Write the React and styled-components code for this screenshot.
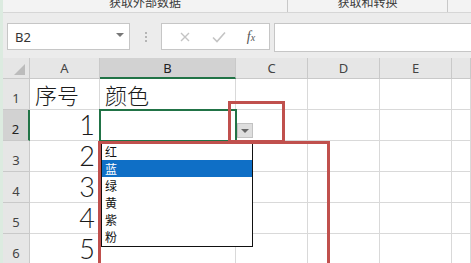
import React from 'react'
import styled, { createGlobalStyle } from 'styled-components'

const GlobalStyle = createGlobalStyle`
    html, body {
        margin: 0;
        padding: 0;
        background: #ffffff;
        overflow: hidden;
    }
    body {
        font-family: "Noto Sans", "Noto Sans CJK SC", sans-serif;
    }
`

const Page = styled.div`
    width: 471px;
    height: 263px;
    overflow: hidden;
    display: flex;
    flex-direction: column;
    background: #ececec;
    border-left: 3px solid #dcebe0;
    box-sizing: border-box;
`

const Ribbon = styled.div`
    height: 12px;
    flex: none;
    display: flex;
    background: #f3f3f3;
    border-bottom: 1px solid #d6d6d6;
    overflow: hidden;
`

const RibbonGroup = styled.div`
    width: ${p => p.w}px;
    flex: none;
    display: flex;
    justify-content: center;
    border-right: 1px solid #c8c8c8;
    font-family: "Noto Sans CJK SC", sans-serif;
    font-size: 12px;
    line-height: 12px;
    color: #3a3a3a;
    & > span {
        margin-top: -4px;
    }
`

const Toolbar = styled.div`
    height: 45px;
    flex: none;
    display: flex;
    align-items: flex-start;
    padding: 10px 0 0 4px;
    box-sizing: border-box;
`

const NameBox = styled.div`
    width: 123px;
    height: 27px;
    box-sizing: border-box;
    background: #fff;
    border: 1px solid #c6c6c6;
    display: flex;
    align-items: center;
    justify-content: space-between;
    padding: 0 5px 0 7px;
    font-family: "Noto Sans", sans-serif;
    font-size: 13px;
    color: #333;
`

const Caret = styled.span`
    width: 0;
    height: 0;
    border-left: 4px solid transparent;
    border-right: 4px solid transparent;
    border-top: 4px solid #777;
    margin-bottom: 4px;
`

const Dots = styled.div`
    width: 31px;
    height: 27px;
    display: flex;
    flex-direction: column;
    align-items: center;
    justify-content: center;
    gap: 2px;
    & > i {
        width: 2px;
        height: 2px;
        background: #b5b5b5;
    }
`

const FuncBox = styled.div`
    width: 109px;
    height: 27px;
    box-sizing: border-box;
    background: #fff;
    border: 1px solid #c6c6c6;
    display: flex;
    align-items: center;
    justify-content: space-around;
    padding: 0 4px 0 6px;
    margin-right: 4px;
`

const Fx = styled.span`
    font-family: "Liberation Serif", serif;
    font-style: italic;
    font-size: 14px;
    color: #555;
    & > small {
        font-size: 10px;
    }
`

const Formula = styled.div`
    flex: 1;
    height: 27px;
    background: #fff;
    border: 1px solid #c6c6c6;
    border-right: none;
`

const SheetArea = styled.div`
    position: relative;
    flex: 1;
    background: #fff;
`

const Grid = styled.div`
    display: grid;
    grid-template-columns: 27px 70px 136px 72px 72px 72px 1fr;
    grid-template-rows: 21px repeat(6, 31px);
`

const Head = styled.div`
    background: ${p => (p.active ? '#d2d2d2' : '#e6e6e6')};
    border-right: 1px solid #c9c9c9;
    border-bottom: ${p => (p.active && !p.row ? '2px solid #217346' : '1px solid #c9c9c9')};
    ${p => p.active && p.row && 'border-right: 2px solid #217346;'}
    box-sizing: border-box;
    display: flex;
    align-items: center;
    justify-content: center;
    font-family: "Noto Sans", sans-serif;
    font-size: 13px;
    color: ${p => (p.active ? '#222' : '#444')};
    padding-top: ${p => (p.row ? '8px' : '0')};
`

const Corner = styled.div`
    background: #e6e6e6;
    border-right: 1px solid #c9c9c9;
    border-bottom: 1px solid #c9c9c9;
    box-sizing: border-box;
    display: flex;
    align-items: flex-end;
    justify-content: flex-end;
    padding: 0 4px 3px 0;
    & > i {
        width: 0;
        height: 0;
        border-left: 11px solid transparent;
        border-bottom: 11px solid #bcbcbc;
    }
`

const Cell = styled.div`
    border-right: 1px solid #d9d9d9;
    border-bottom: 1px solid #d9d9d9;
    box-sizing: border-box;
    display: flex;
    align-items: flex-end;
    justify-content: ${p => (p.num ? 'flex-end' : 'flex-start')};
    padding: ${p => (p.num ? '0 4px 0 0' : '0 0 1px 5px')};
    font-family: ${p => (p.num ? 'Lato, "Liberation Sans", sans-serif' : '"Noto Sans CJK SC", sans-serif')};
    font-size: ${p => (p.num ? '27px' : '22px')};
    line-height: ${p => (p.num ? '30px' : '28px')};
    font-weight: 300;
    color: #1a1a1a;
`

const Selection = styled.div`
    position: absolute;
    left: 96px;
    top: 51px;
    width: 138px;
    height: 33px;
    border: 2px solid #217346;
    box-sizing: border-box;
`

const DropButton = styled.div`
    position: absolute;
    left: 234px;
    top: 65px;
    width: 16px;
    height: 15px;
    box-sizing: border-box;
    background: #dedede;
    border: 1px solid #c2c2c2;
    display: flex;
    align-items: center;
    justify-content: center;
`

const DropCaret = styled.span`
    width: 0;
    height: 0;
    border-left: 4px solid transparent;
    border-right: 4px solid transparent;
    border-top: 4px solid #666;
`

const List = styled.ul`
    position: absolute;
    left: 98px;
    top: 84px;
    width: 152px;
    margin: 0;
    padding: 0;
    list-style: none;
    background: #fff;
    border: 1px solid #111;
    box-sizing: border-box;
    padding-bottom: 1px;
`

const Item = styled.li`
    height: 17px;
    line-height: 17px;
    padding-left: 3px;
    font-family: "Noto Sans CJK SC", sans-serif;
    font-size: 12px;
    background: ${p => (p.selected ? '#0f6fc6' : 'transparent')};
    color: ${p => (p.selected ? '#fff' : '#111')};
`

const RedBox = styled.div`
    position: absolute;
    left: ${p => p.x}px;
    top: ${p => p.y}px;
    width: ${p => p.w}px;
    height: ${p => p.h}px;
    border: 3px solid #c0504d;
    box-sizing: border-box;
`

const columns = ['A', 'B', 'C', 'D', 'E', '']
const options = ['红', '蓝', '绿', '黄', '紫', '粉']

export default function App() {
    const rows = [
        ['序号', '颜色'],
        ['1', ''],
        ['2', ''],
        ['3', ''],
        ['4', ''],
        ['5', ''],
    ]

    return (
        <Page>
            <GlobalStyle />
            <Ribbon>
                <RibbonGroup w={284}><span>获取外部数据</span></RibbonGroup>
                <RibbonGroup w={159}><span>获取和转换</span></RibbonGroup>
            </Ribbon>
            <Toolbar>
                <NameBox>B2<Caret /></NameBox>
                <Dots><i /><i /><i /></Dots>
                <FuncBox>
                    <svg width="14" height="14" viewBox="0 0 14 14">
                        <path d="M3 3 L11 11 M11 3 L3 11" stroke="#c4c4c4" strokeWidth="1.4" />
                    </svg>
                    <svg width="16" height="14" viewBox="0 0 16 14">
                        <path d="M2 7.5 L6 11.5 L14 2.5" stroke="#c4c4c4" strokeWidth="1.6" fill="none" />
                    </svg>
                    <Fx>f<small>x</small></Fx>
                </FuncBox>
                <Formula />
            </Toolbar>
            <SheetArea>
                <Grid>
                    <Corner><i /></Corner>
                    {columns.map((c, i) => (
                        <Head key={'h' + i} active={c === 'B'}>{c}</Head>
                    ))}
                    {rows.map((r, ri) => (
                        <React.Fragment key={ri}>
                            <Head row active={ri === 1}>{ri + 1}</Head>
                            <Cell num={ri > 0}>{r[0]}</Cell>
                            <Cell>{r[1]}</Cell>
                            <Cell />
                            <Cell />
                            <Cell />
                            <Cell />
                        </React.Fragment>
                    ))}
                </Grid>
                <Selection />
                <DropButton><DropCaret /></DropButton>
                <List>
                    {options.map((o, i) => (
                        <Item key={o} selected={i === 1}>{o}</Item>
                    ))}
                </List>
                <RedBox x={225} y={43} w={57} h={42} />
                <RedBox x={95} y={83} w={232} h={130} />
            </SheetArea>
        </Page>
    )
}
